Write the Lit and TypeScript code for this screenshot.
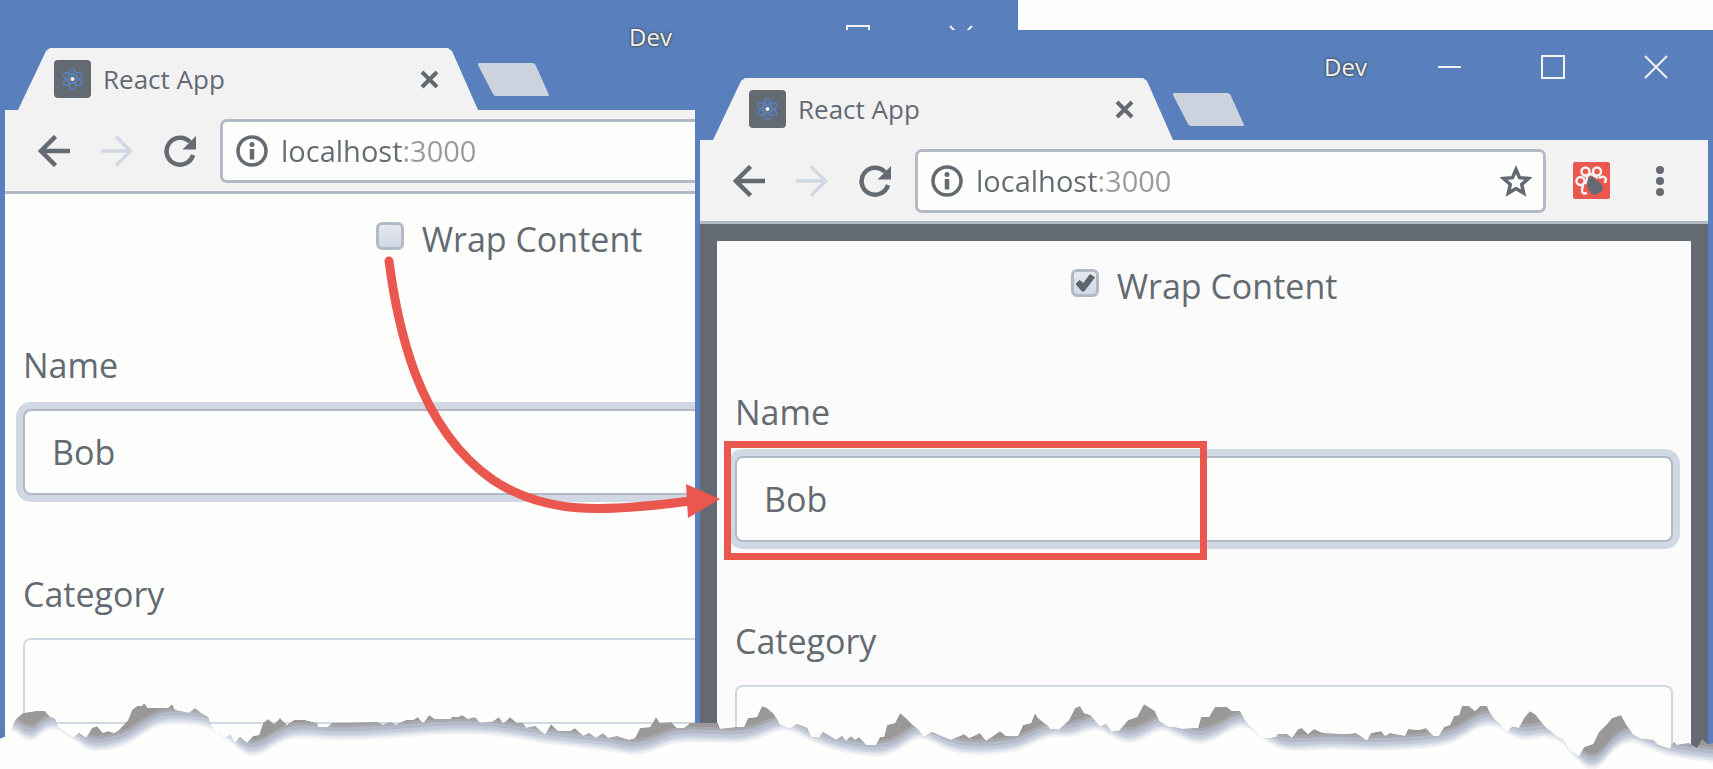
import { LitElement, html, svg, css } from "lit";
import { customElement, property } from "lit/decorators.js";

type Point = [number, number];

// Ragged upper rim of the torn paper, in the units of its 1713 x 79 view box.
const RIM: Point[] = [
  [0, 49], [5, 47], [12, 42], [14, 33], [17, 28], [23, 23], [36, 21], [45, 21], [50, 27], [55, 29], [58, 38], [73, 48],
  [79, 43], [86, 48], [92, 38], [97, 36], [103, 43], [108, 41], [114, 43], [119, 40], [128, 30], [132, 20], [137, 16],
  [142, 16], [144, 13], [148, 18], [168, 18], [172, 14], [175, 20], [189, 23], [195, 18], [201, 23], [208, 27],
  [211, 37], [214, 42], [226, 48], [230, 45], [235, 53], [240, 47], [247, 53], [253, 46], [259, 45], [263, 33],
  [268, 29], [274, 34], [280, 28], [287, 35], [294, 30], [305, 30], [317, 33], [318, 37], [328, 37], [332, 33],
  [377, 32], [383, 35], [390, 32], [396, 35], [406, 30], [413, 30], [418, 27], [423, 34], [429, 25], [435, 29],
  [450, 29], [452, 27], [458, 27], [462, 25], [468, 29], [475, 27], [480, 33], [492, 32], [499, 27], [503, 34],
  [510, 27], [517, 33], [523, 33], [526, 38], [535, 36], [545, 45], [551, 34], [558, 41], [570, 41], [575, 38],
  [583, 46], [589, 43], [596, 48], [603, 43], [608, 48], [617, 46], [629, 50], [635, 48], [640, 38], [650, 37],
  [656, 27], [660, 33], [671, 32], [677, 38], [684, 38], [690, 33], [718, 33], [720, 39], [736, 37], [744, 37],
  [748, 28], [757, 27], [762, 16], [767, 18], [774, 24], [780, 35], [790, 39], [797, 34], [807, 38], [811, 47],
  [819, 48], [823, 42], [836, 50], [842, 46], [846, 51], [851, 46], [855, 50], [859, 47], [866, 55], [876, 55],
  [880, 47], [884, 47], [887, 35], [895, 33], [900, 23], [906, 28], [918, 40], [924, 47], [932, 42], [943, 47],
  [951, 50], [964, 44], [969, 48], [980, 43], [986, 51], [1000, 41], [1006, 46], [1018, 46], [1023, 35], [1031, 33],
  [1035, 23], [1038, 28], [1047, 35], [1050, 39], [1059, 40], [1069, 30], [1075, 18], [1080, 16], [1084, 23],
  [1090, 25], [1100, 37], [1106, 34], [1111, 42], [1119, 41], [1128, 30], [1137, 27], [1144, 14], [1155, 21],
  [1159, 31], [1168, 37], [1173, 37], [1182, 39], [1198, 38], [1201, 27], [1209, 27], [1215, 17], [1227, 17],
  [1232, 21], [1240, 21], [1245, 31], [1250, 37], [1260, 47], [1266, 49], [1276, 47], [1278, 44], [1287, 44],
  [1292, 48], [1298, 39], [1302, 38], [1308, 44], [1314, 39], [1323, 43], [1346, 44], [1356, 43], [1367, 51],
  [1371, 43], [1381, 41], [1385, 46], [1390, 43], [1405, 46], [1408, 39], [1419, 40], [1426, 38], [1433, 46],
  [1439, 46], [1444, 37], [1450, 35], [1454, 26], [1459, 25], [1462, 16], [1469, 16], [1475, 21], [1480, 16],
  [1487, 16], [1491, 25], [1496, 31], [1507, 43], [1512, 37], [1519, 38], [1524, 28], [1530, 21], [1536, 25],
  [1545, 37], [1557, 47], [1563, 50], [1568, 59], [1579, 67], [1584, 57], [1593, 54], [1599, 42], [1607, 34],
  [1612, 28], [1621, 25], [1626, 34], [1633, 45], [1641, 49], [1653, 50], [1658, 55], [1670, 59], [1674, 52],
  [1677, 55], [1689, 53], [1697, 58], [1702, 49], [1708, 54], [1713, 53],
];

// Soft lower limit of the shadow under the rim.
const FOOT: Point[] = [
  [0, 40], [10, 42], [15, 42], [23, 49], [33, 52], [40, 45], [52, 38], [63, 43], [75, 51], [90, 62], [107, 61],
  [126, 56], [147, 42], [161, 35], [180, 34], [199, 36], [209, 38], [226, 48], [245, 66], [260, 66], [279, 53],
  [299, 47], [333, 51], [383, 49], [459, 43], [509, 47], [543, 54], [600, 60], [617, 63], [635, 66], [652, 62],
  [675, 52], [713, 53], [744, 54], [763, 47], [782, 40], [793, 42], [813, 53], [843, 63], [878, 68], [897, 62],
  [916, 48], [927, 50], [950, 62], [973, 66], [1015, 63], [1035, 53], [1054, 46], [1069, 49], [1096, 38],
  [1111, 47], [1128, 55], [1144, 49], [1161, 39], [1174, 45], [1197, 56], [1216, 50], [1235, 38], [1247, 37],
  [1260, 47], [1278, 59], [1293, 62], [1331, 59], [1377, 62], [1438, 58], [1461, 50], [1480, 36], [1500, 37],
  [1511, 47], [1526, 51], [1545, 47], [1561, 52], [1568, 60], [1580, 73], [1588, 80], [1599, 79], [1614, 60],
  [1630, 51], [1645, 57], [1668, 67], [1713, 73],
];

const BANDS: { lift: number; fill: string }[] = [
  { lift: 16, fill: "#a7a8ad" },
  { lift: 13, fill: "#b3b9c6" },
  { lift: 9, fill: "#c3cad7" },
  { lift: 6, fill: "#d0d8e4" },
  { lift: 4, fill: "#e3e7ee" },
  { lift: 2, fill: "#f2f3f4" },
  { lift: 0, fill: "#fefefd" },
];

const area = (pts: Point[], lift = 0) =>
  `M0 90 ` + pts.map(([x, y]) => `L${x} ${y - lift}`).join(" ") + ` L1713 90 Z`;

const smoothArea = (pts: Point[], lift: number) => {
  let d = `M0 90 L0 ${pts[0][1] - lift}`;
  for (let i = 1; i < pts.length - 1; i++) {
    const [x, y] = pts[i];
    const [nx, ny] = pts[i + 1];
    d += ` Q${x} ${y - lift} ${(x + nx) / 2} ${(y + ny) / 2 - lift}`;
  }
  return d + ` L1713 ${pts[pts.length - 1][1] - lift} L1713 90 Z`;
};

@customElement("torn-edge")
export class TornEdge extends LitElement {
  static styles = css`
    :host { display: block; }
    .paper { display: block; width: 100%; height: 79px; }
  `;
  render() {
    return html`<svg class="paper" viewBox="0 0 1713 79" preserveAspectRatio="none" aria-hidden="true">
      <defs><clipPath id="rim"><path d=${area(RIM)} /></clipPath></defs>
      <g clip-path="url(#rim)">
        <path d=${area(RIM)} fill="#9b9898" />
        ${BANDS.map((b) => svg`<path d=${smoothArea(FOOT, b.lift)} fill=${b.fill} />`)}
      </g>
    </svg>`;
  }
}

@customElement("demo-form")
export class DemoForm extends LitElement {
  @property({ type: Boolean }) wrapped = false;

  static styles = css`
    :host {
      display: block;
      flex: 1;
      background: #fefefd;
      color: #636a72;
      font: 34px/46px "Open Sans", "Noto Sans", sans-serif;
    }
    :host([wrapped]) { border: 17px solid #636a72; border-bottom: 0; background: #fbfbfb; }
    .form { display: flex; flex-direction: column; padding: 22px 18px 0; }
    .toggle { display: flex; justify-content: center; align-items: center; gap: 18px; margin-bottom: 80px; }
    .tick { display: grid; margin-bottom: 6px; }
    .tick > * { grid-area: 1 / 1; }
    .box {
      appearance: none;
      box-sizing: border-box;
      width: 28px;
      height: 28px;
      margin: 0;
      border: 3px solid #b3b9c6;
      border-radius: 6px;
      background: linear-gradient(#e6e9ee, #d0d8e4);
    }
    .mark { width: 28px; height: 28px; pointer-events: none; }
    .field { display: flex; flex-direction: column; gap: 21px; margin-bottom: 76px; }
    .text {
      box-sizing: border-box;
      width: 100%;
      height: 86px;
      margin: 0;
      padding: 0 27px;
      border: 2px solid #d0d8e4;
      border-radius: 8px;
      background: #fefefd;
      color: inherit;
      font: inherit;
      outline: none;
    }
    .active { border-color: #b3b9c6; box-shadow: 0 0 0 7px #d0d8e4; }
  `;

  render() {
    return html`<form class="form">
      <div class="toggle">
        <span class="tick">
          <input class="box" id="wrap" type="checkbox" ?checked=${this.wrapped} />
          ${this.wrapped
            ? html`<svg class="mark" viewBox="0 0 28 28" aria-hidden="true">
                <path d="M5 15L8.500 11.500l4 3L19 5.500l4.500 3L13 22h-2z" fill="#5c636b" stroke="#5c636b" stroke-linejoin="round" />
              </svg>`
            : null}
        </span>
        <label for="wrap">Wrap Content</label>
      </div>
      <div class="field">
        <label for="name">Name</label>
        <input class="text active" id="name" type="text" value="Bob" />
      </div>
      <div class="field">
        <label for="category">Category</label>
        <input class="text" id="category" type="text" />
      </div>
    </form>`;
  }
}

@customElement("browser-window")
export class BrowserWindow extends LitElement {
  static styles = css`
    :host {
      box-sizing: border-box;
      display: flex;
      flex-direction: column;
      padding: 0 5px;
      overflow: hidden;
      background: #5980bc;
      color: #636a72;
      font-family: "Open Sans", "Noto Sans", sans-serif;
    }
    svg { display: block; }
    button { display: block; margin: 0; padding: 0; border: 0; background: none; color: inherit; }
    .titlebar { display: flex; flex-shrink: 0; align-items: flex-end; height: 110px; }
    .tab {
      box-sizing: border-box;
      display: flex;
      align-items: center;
      gap: 12px;
      width: 460px;
      height: 62px;
      margin-left: 13px;
      padding: 0 39px 0 36px;
      background: #f2f2f2;
      clip-path: polygon(0 100%, 28px 3px, 32px 0, 430px 0, 434px 3px, 100% 100%);
    }
    .title { flex: 1; font-size: 26px; line-height: 36px; }
    .new-tab { margin-bottom: 14px; }
    .controls {
      display: flex;
      align-items: center;
      align-self: flex-start;
      gap: 79px;
      margin-left: auto;
      padding: 20px 40px 0 0;
      color: #f2f2f2;
    }
    .account { margin-right: -8px; font-size: 24px; line-height: 34px; text-shadow: 0 0 2px #4a5058, 0 0 2px #4a5058, 0 0 3px #4a5058; }
    .toolbar {
      display: flex;
      flex-shrink: 0;
      align-items: center;
      height: 81px;
      padding: 0 40px 0 33px;
      border-bottom: 3px solid #b3b9c6;
      background: #f2f2f2;
    }
    .nav { display: flex; gap: 31px; margin-right: 24px; }
    .next { color: #d0d8e4; }
    .address {
      box-sizing: border-box;
      display: flex;
      flex: 1;
      align-items: center;
      gap: 13px;
      height: 64px;
      padding: 0 11px 0 13px;
      border: 3px solid #b3b9c6;
      border-radius: 7px;
      background: #fefefd;
    }
    .url {
      flex: 1;
      min-width: 0;
      padding: 0;
      border: 0;
      outline: none;
      color: #636a72;
      font: 29px/40px "Open Sans", "Noto Sans", sans-serif;
      background: linear-gradient(to right, #636a72 122px, #9b9898 122px);
      -webkit-background-clip: text;
      background-clip: text;
      -webkit-text-fill-color: transparent;
    }
    .extension { margin: 0 42px 0 27px; }
  `;

  render() {
    return html`
      <header class="titlebar">
        <div class="tab">
          <svg width="37" height="38" viewBox="0 0 37 38" aria-hidden="true">
            <rect width="37" height="38" rx="4" fill="#636a72" />
            <g fill="none" stroke="#5980bc" stroke-width="1.500">
              <ellipse cx="18.500" cy="19" rx="4" ry="10.500" />
              <ellipse cx="18.500" cy="19" rx="4" ry="10.500" transform="rotate(60 18.500 19)" />
              <ellipse cx="18.500" cy="19" rx="4" ry="10.500" transform="rotate(-60 18.500 19)" />
            </g>
            <circle cx="18.500" cy="19" r="2" fill="#f2f2f2" />
          </svg>
          <span class="title">React App</span>
          <button aria-label="Close tab">
            <svg width="19" height="19" viewBox="0 0 19 19"><path d="M2 2l15 15M17 2L2 17" stroke="currentColor" stroke-width="4" /></svg>
          </button>
        </div>
        <button class="new-tab" aria-label="New tab">
          <svg width="72" height="33" viewBox="0 0 72 33"><path d="M1 0H54q3 0 4 3L71 32q0 1-1 1H18q-2 0-3-2L0 2Q0 0 1 0z" fill="#ccd3df" /></svg>
        </button>
        <div class="controls">
          <span class="account">Dev</span>
          <button aria-label="Minimize">
            <svg width="24" height="24" viewBox="0 0 24 24"><path d="M0 12h23" stroke="currentColor" stroke-width="2" /></svg>
          </button>
          <button aria-label="Maximize">
            <svg width="24" height="24" viewBox="0 0 24 24"><path d="M1 1h22v22H1z" fill="none" stroke="currentColor" stroke-width="2" /></svg>
          </button>
          <button aria-label="Close">
            <svg width="24" height="24" viewBox="0 0 24 24"><path d="M1 1l22 22M23 1L1 23" stroke="currentColor" stroke-width="2" /></svg>
          </button>
        </div>
      </header>
      <div class="toolbar">
        <nav class="nav">
          <button aria-label="Back">
            <svg width="32" height="32" viewBox="0 0 32 32"><path d="M32 16H4M17.500 1.500L3 16l14.500 14.500" fill="none" stroke="currentColor" stroke-width="4.500" /></svg>
          </button>
          <button class="next" aria-label="Forward">
            <svg width="32" height="32" viewBox="0 0 32 32"><path d="M0 16h29M15 1.500L29.500 16 15 30.500" fill="none" stroke="currentColor" stroke-width="3.500" /></svg>
          </button>
          <button aria-label="Reload">
            <svg width="32" height="32" viewBox="0 0 32 32">
              <path d="M26 7A13.500 13.500 0 1 0 29 20" fill="none" stroke="currentColor" stroke-width="4.500" />
              <path d="M32 1v13.500H18.500z" fill="currentColor" />
            </svg>
          </button>
        </nav>
        <div class="address">
          <svg width="32" height="32" viewBox="0 0 32 32" aria-hidden="true">
            <circle cx="16" cy="16" r="14" fill="none" stroke="currentColor" stroke-width="3.500" />
            <circle cx="16" cy="9.500" r="2.500" fill="currentColor" />
            <path d="M16 14v10.500" stroke="currentColor" stroke-width="4.500" />
          </svg>
          <input class="url" type="text" aria-label="Address" value="localhost:3000" />
          <button aria-label="Bookmark this page">
            <svg width="32" height="32" viewBox="0 0 32 32"><path d="M16 4.500l3.500 8.200 8.900.8-6.700 5.900 2 8.700L16 23.500l-7.700 4.600 2-8.700-6.700-5.900 8.900-.8z" fill="none" stroke="currentColor" stroke-width="3.500" /></svg>
          </button>
        </div>
        <button class="extension" aria-label="Extension">
          <svg width="37" height="37" viewBox="0 0 37 37">
            <rect width="37" height="37" rx="2" fill="#e9574e" />
            <g fill="none" stroke="#f2f2f2" stroke-width="2.500">
              <circle cx="12.500" cy="9.500" r="4" />
              <circle cx="24" cy="9.500" r="4" />
              <circle cx="7.500" cy="19" r="4" />
              <path d="M26 16q5-3 7 1l-1 4M14 31q-5 2-5-3l1-5M12 15l6-3 7 4M12 22l3-7" />
            </g>
            <path d="M15 16q3-3 6 0l5 4q5 3 3 9l-7 4q-4 0-5-4l-3-4z" fill="#636a72" />
          </svg>
        </button>
        <button aria-label="Menu">
          <svg width="16" height="32" viewBox="0 0 16 32" fill="currentColor">
            <circle cx="8" cy="5" r="4" /><circle cx="8" cy="16" r="4" /><circle cx="8" cy="27" r="4" />
          </svg>
        </button>
      </div>
      <slot></slot>
    `;
  }
}

@customElement("app-root")
export class AppRoot extends LitElement {
  static styles = css`
    :host { display: block; }
    .desktop { position: relative; height: 100vh; overflow: hidden; background: #fefefd; }
    .back { position: absolute; top: 0; right: 695px; bottom: 0; left: 0; }
    .front { position: absolute; top: 30px; right: 0; bottom: 0; left: 695px; }
    .highlight {
      position: absolute;
      top: 441px;
      left: 724px;
      box-sizing: border-box;
      width: 483px;
      height: 119px;
      border: 7px solid #e9574e;
    }
    .arrow { position: absolute; top: 250px; left: 370px; }
    .torn { position: absolute; right: 0; bottom: 0; left: 0; }
  `;

  render() {
    return html`<main class="desktop">
      <browser-window class="back"><demo-form></demo-form></browser-window>
      <browser-window class="front"><demo-form wrapped></demo-form></browser-window>
      <div class="highlight"></div>
      <svg class="arrow" width="360" height="280" viewBox="370 250 360 280" aria-hidden="true">
        <path d="M389 261C394 300 402 338 415 373C432 418 457 455 493 480C545 514 600 513 690 501" fill="none" stroke="#e9574e" stroke-width="9" stroke-linecap="round" />
        <path d="M686 484L720 499L688 518z" fill="#e9574e" />
      </svg>
      <torn-edge class="torn"></torn-edge>
    </main>`;
  }
}
